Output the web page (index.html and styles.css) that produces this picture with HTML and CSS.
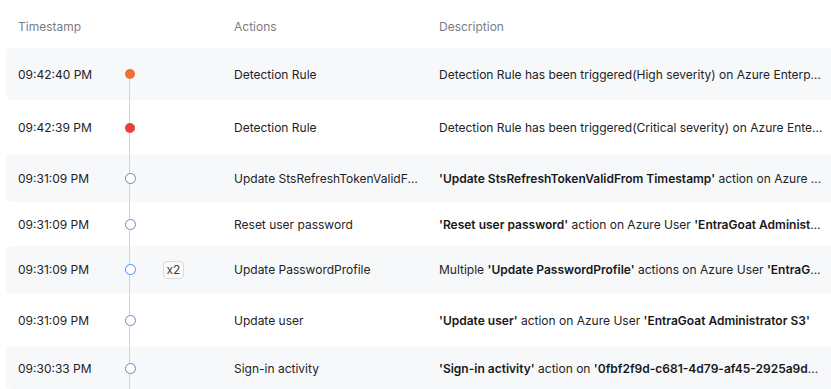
FILE: index.html
```html
<!DOCTYPE html>
<html>
<head>
<meta charset="utf-8">
<link rel="stylesheet" href="styles.css">
</head>
<body>
<div class="table">
  <div class="head">
    <div class="c-time">Timestamp</div>
    <div class="c-line"></div>
    <div class="c-badge"></div>
    <div class="c-act">Actions</div>
    <div class="c-desc">Description</div>
  </div>
  <div class="list">
    <div class="row shade h52 first">
      <div class="c-time">09:42:40 PM</div>
      <div class="c-line"><span class="dot orange"></span></div>
      <div class="c-badge"></div>
      <div class="c-act">Detection Rule</div>
      <div class="c-desc">Detection Rule has been triggered(High severity) on Azure Enterprise Application 'EntraGoat'</div>
    </div>
    <div class="row h55">
      <div class="c-time">09:42:39 PM</div>
      <div class="c-line"><span class="dot red"></span></div>
      <div class="c-badge"></div>
      <div class="c-act">Detection Rule</div>
      <div class="c-desc">Detection Rule has been triggered(Critical severity) on Azure Enterprise Application 'EntraGoat'</div>
    </div>
    <div class="row shade h47">
      <div class="c-time">09:31:09 PM</div>
      <div class="c-line"><span class="dot ring"></span></div>
      <div class="c-badge"></div>
      <div class="c-act">Update StsRefreshTokenValidFrom Timestamp</div>
      <div class="c-desc"><b>'Update StsRefreshTokenValidFrom Timestamp'</b> action on Azure User 'EntraGoat Administrator S3'</div>
    </div>
    <div class="row h44">
      <div class="c-time">09:31:09 PM</div>
      <div class="c-line"><span class="dot ring"></span></div>
      <div class="c-badge"></div>
      <div class="c-act">Reset user password</div>
      <div class="c-desc"><b>'Reset user password'</b> action on Azure User <b>'EntraGoat Administrator S3'</b></div>
    </div>
    <div class="row shade h47">
      <div class="c-time">09:31:09 PM</div>
      <div class="c-line"><span class="dot ring"></span></div>
      <div class="c-badge"><span class="badge">x2</span></div>
      <div class="c-act">Update PasswordProfile</div>
      <div class="c-desc">Multiple <b>'Update PasswordProfile'</b> actions on Azure User <b>'EntraGoat Administrator S3'</b></div>
    </div>
    <div class="row h54">
      <div class="c-time">09:31:09 PM</div>
      <div class="c-line"><span class="dot ring"></span></div>
      <div class="c-badge"></div>
      <div class="c-act">Update user</div>
      <div class="c-desc"><b>'Update user'</b> action on Azure User <b>'EntraGoat Administrator S3'</b></div>
    </div>
    <div class="row shade h42 last">
      <div class="c-time">09:30:33 PM</div>
      <div class="c-line"><span class="dot ring"></span></div>
      <div class="c-badge"></div>
      <div class="c-act">Sign-in activity</div>
      <div class="c-desc"><b>'Sign-in activity'</b> action on <b>'0fbf2f9d-c681-4d79-af45-2925a9d6e1b2'</b></div>
    </div>
  </div>
</div>
</body>
</html>
```

FILE: styles.css
```css
* { box-sizing: border-box; }
html, body { margin: 0; padding: 0; background: #ffffff; overflow: hidden; }
body {
  font-family: Inter, "Noto Sans", sans-serif;
  font-size: 12px;
  color: #232326;
}
.table { padding-left: 6px; width: 850px; }
.head, .row {
  display: grid;
  grid-template-columns: 95px 34px 87px 205px 384px;
  align-items: center;
  padding-left: 12px;
}
.head { height: 48px; padding-top: 5px; color: #7a7d84; }
.row { border-radius: 5px; }
.row.shade { background: #f7f8fa; }
.h52 { height: 52px; }
.h55 { height: 55px; }
.h47 { height: 47px; }
.h44 { height: 44px; }
.h54 { height: 54px; }
.h42 { height: 42px; }
.c-time, .c-act, .c-desc {
  white-space: nowrap;
  overflow: hidden;
  text-overflow: ellipsis;
}
.c-act { padding-right: 17px; }
.c-desc b { font-weight: 600; color: #18181b; }
.row .c-line {
  position: relative;
  align-self: stretch;
  display: flex;
  align-items: center;
  justify-content: center;
}
.row .c-line::before {
  content: "";
  position: absolute;
  left: 16px;
  width: 1px;
  top: 0;
  bottom: 0;
  background: #d4d4d8;
}
.row.first .c-line::before { top: 50%; }
.dot {
  position: relative;
  width: 10px;
  height: 10px;
  border-radius: 50%;
}
.dot.orange { background: #f07035; }
.dot.red { background: #e8403a; }
.dot.ring { background: #ffffff; border: 1.5px solid #4a8ff7; width: 11px; height: 11px; }
.c-badge { padding-left: 16px; display: flex; align-items: center; }
.badge {
  display: inline-flex;
  align-items: center;
  justify-content: center;
  width: 21px;
  height: 18px;
  border: 1px solid #d9dadd;
  border-radius: 4px;
  font-size: 12px;
  color: #3f3f46;
  background: #fafafa;
}
```
